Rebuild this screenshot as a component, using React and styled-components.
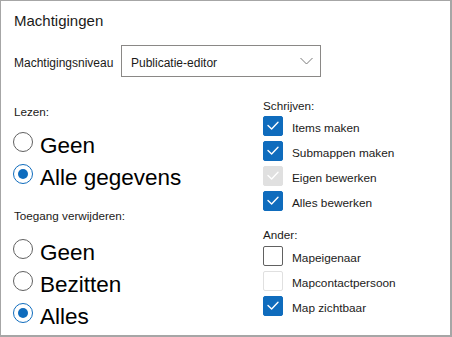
import React from "react";
import styled, { createGlobalStyle } from "styled-components";

const Global = createGlobalStyle`
  html, body { margin: 0; padding: 0; background: #fff; }
  body { font-family: "Liberation Sans", Arial, sans-serif; color: #1b1a19; }
  * { box-sizing: border-box; }
`;

const Panel = styled.div`
  width: 452px;
  height: 337px;
  border-style: solid;
  border-color: #a6a6a6;
  border-width: 1px 2px 2px 1px;
  padding: 12px 0 0 13px;
  background: #fff;
  overflow: hidden;
`;

const Title = styled.div`
  font-size: 15px;
  line-height: 16px;
  color: #1b1a19;
`;

const LevelRow = styled.div`
  display: flex;
  align-items: center;
  margin-top: 16px;
  height: 32px;
`;

const FieldLabel = styled.div`
  flex: 0 0 107px;
  font-size: 12px;
  line-height: 14px;
  padding-top: 3px;
`;

const Select = styled.div`
  width: 200px;
  height: 32px;
  border: 1px solid #8a8886;
  display: flex;
  align-items: center;
  justify-content: space-between;
  padding: 3px 7px 0 9px;
  font-size: 12px;
  line-height: 14px;
`;

const Chevron = styled.svg`
  width: 13px;
  height: 8px;
  margin-top: -3px;
`;

const Columns = styled.div`
  display: grid;
  grid-template-columns: 249px 1fr;
  margin-top: 22px;
`;

const Column = styled.div`
  display: flex;
  flex-direction: column;
  padding-top: ${(p) => p.$offset || 0}px;
`;

const GroupLabel = styled.div`
  font-size: 11.7px;
  line-height: 13px;
  margin-top: ${(p) => p.$mt || 0}px;
`;

const RadioList = styled.div`
  display: flex;
  flex-direction: column;
  gap: 5px;
  margin-top: ${(p) => p.$mt || 0}px;
  margin-left: -1px;
`;

const RadioRow = styled.div`
  display: flex;
  align-items: flex-start;
  gap: 7px;
`;

const Circle = styled.span`
  flex: 0 0 20px;
  width: 20px;
  height: 20px;
  border-radius: 50%;
  border: 1px solid ${(p) => (p.$checked ? "#0f6cbd" : "#616161")};
  display: flex;
  align-items: center;
  justify-content: center;
  &::after {
    content: "";
    display: ${(p) => (p.$checked ? "block" : "none")};
    width: 10px;
    height: 10px;
    border-radius: 50%;
    background: #0f6cbd;
  }
`;

const RadioText = styled.span`
  font-size: 22.5px;
  line-height: 26px;
  margin-top: 1px;
  color: #000;
`;

const CheckList = styled.div`
  display: flex;
  flex-direction: column;
  gap: 4px;
  margin-top: ${(p) => p.$mt || 0}px;
`;

const CheckRow = styled.div`
  display: flex;
  align-items: flex-start;
  gap: 9px;
`;

const boxBg = (p) => (p.$checked ? (p.$disabled ? "#e0e0e0" : "#0f6cbd") : "#fff");
const boxBorder = (p) =>
  p.$checked ? (p.$disabled ? "#e0e0e0" : "#0f6cbd") : p.$disabled ? "#e0e0e0" : "#616161";

const Box = styled.span`
  flex: 0 0 20px;
  width: 20px;
  height: 20px;
  border-radius: 2px;
  background: ${boxBg};
  border: 1px solid ${boxBorder};
  display: flex;
  align-items: center;
  justify-content: center;
`;

const CheckText = styled.span`
  font-size: 11.8px;
  line-height: 17px;
  margin-top: 4px;
  color: #1b1a19;
`;

const Radio = ({ checked, children }) => (
  <RadioRow>
    <Circle $checked={checked} />
    <RadioText>{children}</RadioText>
  </RadioRow>
);

const Checkbox = ({ checked, disabled, children }) => (
  <CheckRow>
    <Box $checked={checked} $disabled={disabled}>
      {checked && (
        <svg width="18" height="18" viewBox="0 0 18 18">
          <path d="M4 8.6 L7.6 12 L14 5.2" fill="none" stroke="#fff" strokeWidth="1.4" strokeLinecap="round" strokeLinejoin="round" />
        </svg>
      )}
    </Box>
    <CheckText>{children}</CheckText>
  </CheckRow>
);

export default function App() {
  return (
    <>
      <Global />
      <Panel>
        <Title>Machtigingen</Title>
        <LevelRow>
          <FieldLabel>Machtigingsniveau</FieldLabel>
          <Select>
            <span>Publicatie-editor</span>
            <Chevron viewBox="0 0 13 8">
              <path d="M0.5 1 L6.5 7 L12.5 1" fill="none" stroke="#7a7a7a" strokeWidth="1" />
            </Chevron>
          </Select>
        </LevelRow>
        <Columns>
          <Column $offset={6}>
            <GroupLabel>Lezen:</GroupLabel>
            <RadioList $mt={14}>
              <Radio>Geen</Radio>
              <Radio checked>Alle gegevens</Radio>
            </RadioList>
            <GroupLabel $mt={18}>Toegang verwijderen:</GroupLabel>
            <RadioList $mt={17}>
              <Radio>Geen</Radio>
              <Radio>Bezitten</Radio>
              <Radio checked>Alles</Radio>
            </RadioList>
          </Column>
          <Column>
            <GroupLabel>Schrijven:</GroupLabel>
            <CheckList $mt={4}>
              <Checkbox checked>Items maken</Checkbox>
              <Checkbox checked>Submappen maken</Checkbox>
              <Checkbox checked disabled>Eigen bewerken</Checkbox>
              <Checkbox checked>Alles bewerken</Checkbox>
            </CheckList>
            <GroupLabel $mt={16}>Ander:</GroupLabel>
            <CheckList $mt={5}>
              <Checkbox>Mapeigenaar</Checkbox>
              <Checkbox disabled>Mapcontactpersoon</Checkbox>
              <Checkbox checked>Map zichtbaar</Checkbox>
            </CheckList>
          </Column>
        </Columns>
      </Panel>
    </>
  );
}
